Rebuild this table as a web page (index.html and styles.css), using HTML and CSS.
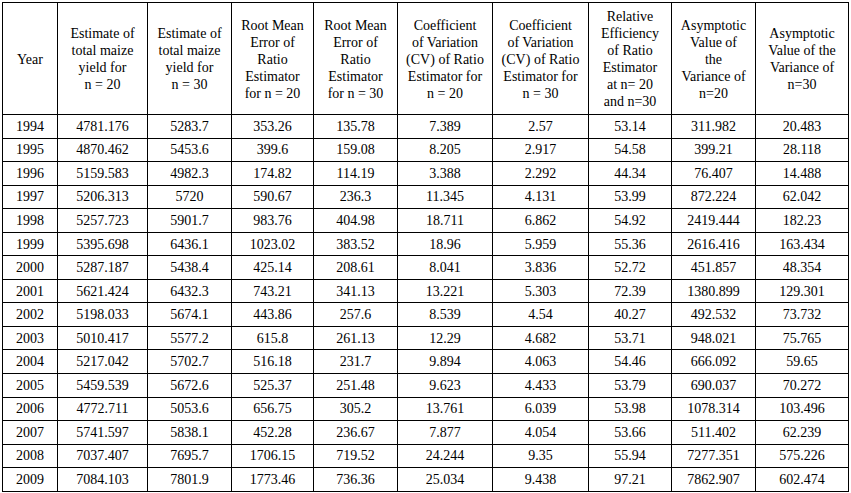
FILE: index.html
```html
<!DOCTYPE html>
<html lang="en">
<head>
  <meta charset="UTF-8">
  <title>Maize Yield Estimates</title>
  <link rel="stylesheet" href="styles.css">
</head>
<body>
  <table class="yield-table">
    <colgroup>
      <col style="width: 55px">
      <col style="width: 90px">
      <col style="width: 84px">
      <col style="width: 82px">
      <col style="width: 84px">
      <col style="width: 95px">
      <col style="width: 96px">
      <col style="width: 83px">
      <col style="width: 84px">
      <col style="width: 93px">
    </colgroup>
    <thead>
      <tr>
        <th>Year</th>
        <th>Estimate of<br>total maize<br>yield for<br>n = 20</th>
        <th>Estimate of<br>total maize<br>yield for<br>n = 30</th>
        <th>Root Mean<br>Error of<br>Ratio<br>Estimator<br>for n = 20</th>
        <th>Root Mean<br>Error of<br>Ratio<br>Estimator<br>for n = 30</th>
        <th>Coefficient<br>of Variation<br>(CV) of Ratio<br>Estimator for<br>n = 20</th>
        <th>Coefficient<br>of Variation<br>(CV) of Ratio<br>Estimator for<br>n = 30</th>
        <th>Relative<br>Efficiency<br>of Ratio<br>Estimator<br>at n= 20<br>and n=30</th>
        <th>Asymptotic<br>Value of<br>the<br>Variance of<br>n=20</th>
        <th>Asymptotic<br>Value of the<br>Variance of<br>n=30</th>
      </tr>
    </thead>
    <tbody id="rows"></tbody>
  </table>

  <script>
    const data = [
      ['1994', '4781.176', '5283.7', '353.26', '135.78', '7.389', '2.57', '53.14', '311.982', '20.483'],
      ['1995', '4870.462', '5453.6', '399.6', '159.08', '8.205', '2.917', '54.58', '399.21', '28.118'],
      ['1996', '5159.583', '4982.3', '174.82', '114.19', '3.388', '2.292', '44.34', '76.407', '14.488'],
      ['1997', '5206.313', '5720', '590.67', '236.3', '11.345', '4.131', '53.99', '872.224', '62.042'],
      ['1998', '5257.723', '5901.7', '983.76', '404.98', '18.711', '6.862', '54.92', '2419.444', '182.23'],
      ['1999', '5395.698', '6436.1', '1023.02', '383.52', '18.96', '5.959', '55.36', '2616.416', '163.434'],
      ['2000', '5287.187', '5438.4', '425.14', '208.61', '8.041', '3.836', '52.72', '451.857', '48.354'],
      ['2001', '5621.424', '6432.3', '743.21', '341.13', '13.221', '5.303', '72.39', '1380.899', '129.301'],
      ['2002', '5198.033', '5674.1', '443.86', '257.6', '8.539', '4.54', '40.27', '492.532', '73.732'],
      ['2003', '5010.417', '5577.2', '615.8', '261.13', '12.29', '4.682', '53.71', '948.021', '75.765'],
      ['2004', '5217.042', '5702.7', '516.18', '231.7', '9.894', '4.063', '54.46', '666.092', '59.65'],
      ['2005', '5459.539', '5672.6', '525.37', '251.48', '9.623', '4.433', '53.79', '690.037', '70.272'],
      ['2006', '4772.711', '5053.6', '656.75', '305.2', '13.761', '6.039', '53.98', '1078.314', '103.496'],
      ['2007', '5741.597', '5838.1', '452.28', '236.67', '7.877', '4.054', '53.66', '511.402', '62.239'],
      ['2008', '7037.407', '7695.7', '1706.15', '719.52', '24.244', '9.35', '55.94', '7277.351', '575.226'],
      ['2009', '7084.103', '7801.9', '1773.46', '736.36', '25.034', '9.438', '97.21', '7862.907', '602.474']
    ];

    const tbody = document.getElementById('rows');
    data.forEach(row => {
      const tr = document.createElement('tr');
      row.forEach(value => {
        const td = document.createElement('td');
        td.textContent = value;
        tr.appendChild(td);
      });
      tbody.appendChild(tr);
    });
  </script>
</body>
</html>
```

FILE: styles.css
```css
body {
  margin: 0;
  padding: 2px;
  background: #fff;
  font-family: "Liberation Serif", "Times New Roman", serif;
  color: #000;
}
.yield-table {
  border-collapse: collapse;
  table-layout: fixed;
  width: 847px;
  font-size: 14px;
}
.yield-table th,
.yield-table td {
  border: 1px solid #000;
  text-align: center;
  vertical-align: middle;
  padding: 0 2px;
  white-space: nowrap;
}
.yield-table th {
  font-weight: normal;
  line-height: 17px;
  height: 110px;
  padding-top: 1px;
}
.yield-table td {
  height: 21.55px;
  line-height: 16px;
  padding-top: 1px;
}
```
